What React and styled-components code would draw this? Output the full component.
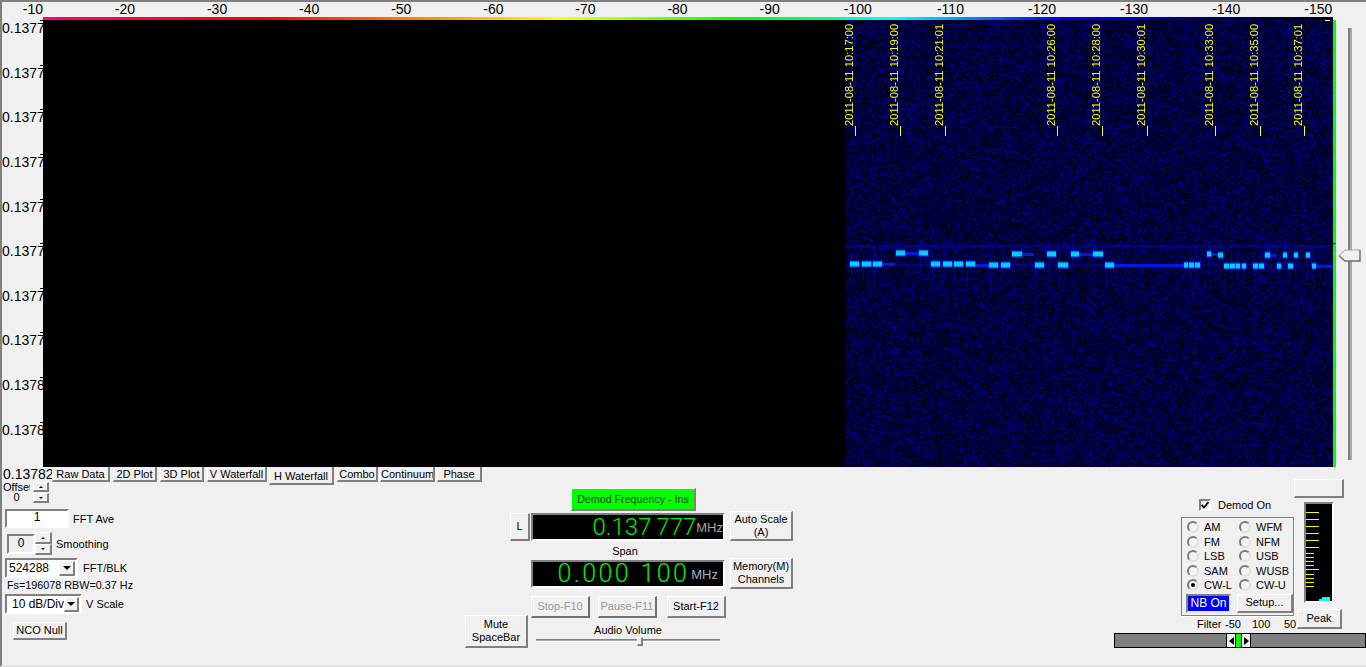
import React, { useEffect, useRef } from "react";
import styled, { createGlobalStyle, css } from "styled-components";

const Global = createGlobalStyle`
  html, body { margin: 0; padding: 0; background: #f0f0f0; overflow: hidden; }
  * { box-sizing: border-box; }
  body { font: 11px/14px "Liberation Sans", Arial, sans-serif; color: #000; }
`;

const raised = css`
  background: #f0f0f0;
  border-style: solid;
  border-width: 1px 2px 2px 1px;
  border-color: #fff #808080 #808080 #fff;
`;
const sunken = css`
  border-style: solid;
  border-width: 2px;
  border-color: #808080 #fff #fff #808080;
`;

const Frame = styled.div`
  width: 1366px; height: 667px; overflow: hidden;
  background: #f0f0f0;
  border-top: 2px solid #808080;
  border-left: 2px solid #808080;
  border-bottom: 2px solid #e4e4e4;
  display: flex; flex-direction: column;
`;
const ScaleRow = styled.div`
  height: 15px; display: flex; font-size: 14px; line-height: 15px;
`;
const ScaleCell = styled.div`
  flex: none; width: ${p => p.$w}px; text-align: right;
`;
const Body = styled.div`display: flex; height: 450px;`;
const AxisCol = styled.div`
  width: 41px; flex: none; padding-top: 1px; overflow: hidden;
`;
const AxisLabel = styled.div`
  position: relative; height: 44.65px; font-size: 14px; line-height: 20px; white-space: nowrap;
  &::before {
    content: ""; position: absolute; top: 2px; right: 0; width: 3px; height: 1px; background: #000;
  }
`;
const PlotCol = styled.div`width: 1290px; flex: none; display: flex; flex-direction: column;`;
const ColorBar = styled.div`
  height: 3px;
  background: linear-gradient(90deg, #ff0080 0%, #ff0000 17%, #ffff00 40%, #00ff00 54%, #00ffff 66%, #0000ff 78.5%, #000000 100%);
`;
const Plot = styled.div`
  position: relative; height: 447px; background: #000;
  &::after { content: ""; position: absolute; top: 0; right: 3px; width: 5px; height: 1px; background: #fff; }
`;
const WaterCanvas = styled.canvas`display: block;`;
const TimeMark = styled.div`
  position: absolute; top: 5px; left: ${p => p.$x - 54}px; height: 111px;
  display: flex; align-items: flex-end;
`;
const TimeText = styled.div`
  writing-mode: vertical-rl; transform: rotate(180deg);
  width: 12px; line-height: 12px; height: 101px; margin-bottom: 10px; white-space: nowrap;
  font-size: 11.2px; color: #ffff00; text-align: left;
`;
const TimeTick = styled.div`width: 1px; height: 10px; background: #ffff00;`;
const GreenBar = styled.div`
  position: relative; width: 3px; height: 447px; margin-top: 3px; background: #00ff00; flex: none;
  &::after { content: ""; position: absolute; top: 223px; left: 0; width: 3px; height: 1px; background: #003000; }
`;
const SliderCol = styled.div`
  position: relative; flex: 1; display: flex; justify-content: flex-start; padding: 11px 0 7px 12px;
`;
const VTrack = styled.div`
  width: 4px; background: #a8a8a8; border-left: 2px solid #808080;
`;
const VThumb = styled.svg`position: absolute; left: 2px; top: 232px;`;

const Bottom = styled.div`
  flex: 1; display: grid;
  grid-template-columns: 463px 330px 1fr;
  grid-template-rows: 21px 1fr;
`;
const LeftCol = styled.div`
  grid-column: 1; grid-row: 1 / 3; padding-left: 3px;
`;
const CutLabel = styled.div`
  margin-left: -2px; width: 50px; height: 14px; overflow: hidden; font-size: 14px; line-height: 14px; white-space: nowrap;
`;
const OffsetRow = styled.div`display: flex; margin-top: 1px; margin-left: -2px;`;
const OffsetText = styled.div`
  width: 27px; height: 21px; text-align: center; line-height: 10px; overflow: hidden;
`;
const SpinStack = styled.div`
  display: flex; flex-direction: column; gap: ${p => p.$gap ?? 0}px; margin-left: ${p => p.$ml ?? 0}px;
`;
const SpinBtn = styled.div`
  ${raised};
  width: ${p => p.$w ?? 16}px; height: ${p => p.$h ?? 10}px;
  display: flex; align-items: center; justify-content: center;
  &::after {
    content: ""; width: 0; height: 0;
    border-left: 2px solid transparent; border-right: 2px solid transparent;
    ${p => p.$up ? "border-bottom: 2px solid #000;" : "border-top: 2px solid #000;"}
  }
`;
const FieldRow = styled.div`
  display: flex; align-items: center; margin-top: ${p => p.$mt ?? 0}px; margin-left: ${p => p.$ml ?? 0}px;
`;
const NumBox = styled.div`
  ${sunken};
  width: ${p => p.$w}px; height: ${p => p.$h}px; background: ${p => p.$bg};
  text-align: center; line-height: ${p => p.$h - 6}px; font-size: 12px;
`;
const FieldLabel = styled.div`margin-left: ${p => p.$ml}px; white-space: nowrap;`;
const Select = styled.div`
  ${sunken};
  width: ${p => p.$w}px; height: 20px; background: #fff;
  display: flex; align-items: center; justify-content: space-between;
  padding: 0 1px 0 ${p => p.$pl}px; font-size: 12px; white-space: nowrap;
`;
const SelectArrow = styled.div`
  ${raised};
  width: 16px; height: 15px; display: flex; align-items: center; justify-content: center;
  &::after {
    content: ""; width: 0; height: 0;
    border-left: 4px solid transparent; border-right: 4px solid transparent; border-top: 4px solid #000;
  }
`;
const FsLine = styled.div`margin-left: 2px; white-space: nowrap; font-size: 10.8px;`;
const Btn = styled.button`
  ${raised};
  display: block; padding: 0; margin: 0; flex: none;
  font: 11px/13px "Liberation Sans", Arial, sans-serif; color: ${p => p.$disabled ? "#9a9a9a" : "#000"};
  width: ${p => p.$w}px; height: ${p => p.$h}px;
  margin-top: ${p => p.$mt ?? 0}px; margin-left: ${p => p.$ml ?? 0}px;
  ${p => p.$disabled && "border-color: #fff #6f6f6f #6f6f6f #fff;"}
`;

const Tabs = styled.div`
  grid-column: 1 / 3; grid-row: 1; margin-left: 50px; display: flex; align-items: flex-start; height: 18px; position: relative; z-index: 1;
`;
const Tab = styled.div`
  ${raised};
  border-top: 0;
  width: ${p => p.$w}px; height: ${p => p.$active ? 18 : 15}px;
  margin-right: ${p => p.$gap}px;
  text-align: center; line-height: ${p => p.$active ? 18 : 14}px; font-size: 11px; white-space: nowrap; overflow: hidden;
`;

const CenterCol = styled.div`grid-column: 2; grid-row: 2; display: flex; flex-direction: column;`;
const DemodBtn = styled(Btn)`background: #00ff00; color: #063a06; font-size: 10.7px; border-color: #fff #808080 #808080 #fff;`;
const FreqRow = styled.div`display: flex; align-items: flex-end; height: ${p => p.$h}px; margin-left: ${p => p.$ml}px;`;
const SmallCaption = styled.div`height: 17px; padding-top: 3px; margin-left: 66px; width: 188px; text-align: center;`;
const Display = styled.div`
  ${sunken};
  width: 194px; height: 28px; background: #000; flex: none;
  margin-left: ${p => p.$ml ?? 0}px; margin-bottom: ${p => p.$mb ?? 0}px; margin-right: 5px;
  display: flex; align-items: center; justify-content: flex-end; padding-right: ${p => p.$pr}px;
`;
const Digits = styled.span`
  font: 300 ${p => p.$fs}px/24px Roboto, "Liberation Sans", sans-serif; color: #00f000;
  letter-spacing: ${p => p.$ls}px; word-spacing: ${p => p.$ws}px; white-space: nowrap;
`;
const Unit = styled.span`
  font-size: 13px; color: ${p => p.$c}; margin-left: ${p => p.$ml}px; padding-top: 2px;
`;
const TransportRow = styled.div`display: flex; margin: 7px 0 0 66px;`;
const AudioRow = styled.div`display: flex; margin-top: -3px;`;
const AudioCol = styled.div`
  width: 184px; margin-left: 8px; padding-top: 8px; display: flex; flex-direction: column; align-items: center;
`;
const AudioTrack = styled.div`
  position: relative; width: 184px; height: 3px; margin-top: 2px;
  background: #a8a8a8; border-top: 1px solid #808080; border-bottom: 1px solid #fff;
`;
const AudioThumb = styled.div`
  ${raised};
  position: absolute; left: 101px; top: -3px; width: 6px; height: 9px;
`;

const RightCol = styled.div`grid-column: 3; grid-row: 1 / 3; display: flex; flex-direction: column;`;
const RightTop = styled.div`display: flex; height: 166px; margin-left: 386px;`;
const ModeCol = styled.div`width: 113px; flex: none; padding-top: 32px;`;
const DemodLine = styled.div`display: flex; align-items: center; height: 12px; margin-left: 18px;`;
const CheckBox = styled.div`
  ${sunken};
  width: 12px; height: 12px; background: #f0f0f0; margin-right: 7px;
  display: flex; align-items: center; justify-content: center;
`;
const ModeBox = styled.div`
  margin-top: 6px; height: 99px; border: 1px solid #808080; box-shadow: 1px 1px 0 #fff;
  padding: 2px 0 0 4px;
`;
const ModeGrid = styled.div`
  display: grid; grid-template-columns: 52px 52px; grid-auto-rows: 14.5px; padding-left: 1px;
`;
const ModeItem = styled.div`display: flex; align-items: center; font-size: 11px;`;
const Radio = styled.div`
  position: relative; width: 12px; height: 12px; border-radius: 50%; background: #f4f4f4;
  border: 2px solid; border-color: #7a7a7a #e0e0e0 #e0e0e0 #7a7a7a; margin-right: 5px; flex: none;
  ${p => p.$on && css`
    &::after {
      content: ""; position: absolute; left: 2px; top: 2px; width: 4px; height: 4px; border-radius: 50%; background: #000;
    }
  `}
`;
const ModeBtns = styled.div`display: flex; gap: 6px; margin-top: 1px; align-items: flex-start;`;
const NbBtn = styled(Btn)`
  background: #0000ff; color: #fff; font-size: 12px;
  border-color: #808080 #e8e8e8 #e8e8e8 #808080; border-width: 2px;
`;
const FilterLabels = styled.div`
  display: grid; grid-template-columns: 28px 27px 32px auto; margin: 1px 0 0 16px; white-space: nowrap; font-size: 11px;
`;
const MeterCol = styled.div`width: 50px; flex: none; padding-top: 12px;`;
const MeterBox = styled.div`
  ${sunken};
  width: 30px; height: 101px; margin: 4px 0 6px 10px; background: #000;
`;
const MeterSvg = styled.svg`display: block;`;
const FilterBar = styled.div`
  margin-left: 319px; height: 15px; border: 1px solid #000; background: #808080;
  display: flex; padding-left: 111px;
`;
const FilterArrow = styled.div`
  width: 10px; background: #f0f0f0; border-left: 1px solid #000; border-right: 1px solid #000;
  display: flex; align-items: center; justify-content: center;
  &::after {
    content: ""; width: 0; height: 0;
    border-top: 4px solid transparent; border-bottom: 4px solid transparent;
    ${p => p.$left ? "border-right: 5px solid #000;" : "border-left: 5px solid #000;"}
  }
`;
const FilterGreen = styled.div`width: 5px; background: #00ff00; flex: none;`;

const SCALE = [-10, -20, -30, -40, -50, -60, -70, -80, -90, -100, -110, -120, -130, -140, -150];
const AXIS = ["0.1377", "0.1377", "0.1377", "0.1377", "0.1377", "0.1377", "0.1377", "0.1377", "0.1378", "0.1378"];
const TIMES = [
  [854, "10:17:00"], [899, "10:19:00"], [944, "10:21:01"], [1056, "10:26:00"], [1101, "10:28:00"],
  [1146, "10:30:01"], [1214, "10:33:00"], [1259, "10:35:00"], [1303, "10:37:01"],
];
const TABS = [
  ["Raw Data", 58, 3], ["2D Plot", 44, 3], ["3D Plot", 44, 3], ["V Waterfall", 60, 2], ["H Waterfall", 65, 3, true],
  ["Combo", 41, 2], ["Continuum", 55, 2], ["Phase", 45, 0],
];
const MODES = [
  ["AM", "WFM"], ["FM", "NFM"], ["LSB", "USB"], ["SAM", "WUSB"], ["CW-L", "CW-U"],
];
const LOWER = [[30,58],[65,92],[98,126],[271,298],[306,333],[340,367],[376,402],[444,471],[478,505],[580,608],[650,677],[788,815],[1022,1034],[1039,1052],[1056,1070],[1142,1157],[1160,1174],[1177,1191],[1195,1209],[1229,1243],[1247,1261],[1299,1311],[1333,1347],[1403,1416]];
const LOWER_DIM = [[126,163],[402,444],[815,1022],[1416,1470]];
const UPPER = [[168,194],[236,263],[513,540],[617,644],[686,712],[754,781],[1091,1104],[1126,1139],[1264,1278],[1317,1330],[1350,1364],[1385,1398]];
const UPPER_DIM = [[194,236],[540,578],[712,754],[1104,1126],[1278,1298]];
const LOWER_Y = 261, UPPER_Y = 250, PLOT_Y = 20, PLOT_X = 43;
const zx = z => Math.round(840 + z / 2.975 - PLOT_X);

function drawWaterfall(cv) {
  const W = 1290, H = 447, x0 = 845 - PLOT_X;
  const ctx = cv.getContext("2d");
  const img = ctx.createImageData(W, H);
  let s = 123456789;
  const rnd = () => { s ^= s << 13; s ^= s >>> 17; s ^= s << 5; return (s >>> 0) / 4294967296; };
  const prevRow = new Float32Array(W);
  for (let y = 0; y < H; y++) {
    let prev = 0;
    for (let x = 0; x < W; x++) {
      const i = (y * W + x) * 4;
      img.data[i + 3] = 255;
      if (x < x0) continue;
      const r = rnd();
      const v = 0.9 * r * r + 0.3 * prev + 0.12 * prevRow[x];
      prev = v; prevRow[x] = v;
      img.data[i + 2] = Math.min(160, v * 122);
    }
  }
  ctx.putImageData(img, 0, 0);
  const drift = x => Math.round((x - x0) / 490 * 2);

  // weak carrier lines
  ctx.fillStyle = "rgba(0,0,200,0.6)";
  ctx.fillRect(x0, 245 - PLOT_Y, W - x0, 2);
  ctx.fillStyle = "rgba(0,0,200,0.45)";
  ctx.fillRect(x0, 264 - PLOT_Y, W - x0, 2);

  const streak = (x, top, bot, a) => {
    ctx.fillStyle = `rgba(0,20,240,${a})`;
    ctx.fillRect(x, top - PLOT_Y, 1, bot - top);
  };
  const run = (list, y0, dim) => {
    list.forEach(([a, b], i) => {
      const xa = zx(a), xb = zx(b), d = drift(xa), y = y0 + d - PLOT_Y;
      if (dim) {
        ctx.fillStyle = "#0018e8";
        ctx.fillRect(xa, y + 2, xb - xa, 3);
        return;
      }
      streak(xa + 1, y0 - 8 - (i % 3) * 3, y0 + 18 + (i % 4) * 4, 0.3);
      ctx.fillStyle = "rgba(0,40,255,0.55)";
      ctx.fillRect(xa - 1, y - 1, xb - xa + 2, 8);
      ctx.fillStyle = "#0068ff";
      ctx.fillRect(xa, y, xb - xa, 6);
      ctx.fillStyle = "#00d0ff";
      ctx.fillRect(xa, y + 1, xb - xa, 4);
    });
  };
  run(LOWER_DIM, LOWER_Y, true);
  run(UPPER_DIM, UPPER_Y, true);
  run(LOWER, LOWER_Y, false);
  run(UPPER, UPPER_Y, false);
}

const Waterfall = () => {
  const ref = useRef(null);
  useEffect(() => { if (ref.current) drawWaterfall(ref.current); }, []);
  return <WaterCanvas ref={ref} width={1290} height={447} />;
};

const LONG = [8, 15, 22, 29, 36, 43, 65];
const SHORT = [49, 53, 57, 61, 70, 74, 78, 82];

export default function App() {
  return (
    <Frame>
      <Global />
      <ScaleRow>
        {SCALE.map((v, i) => <ScaleCell key={v} $w={i === 0 ? 41 : 92.1}>{v}</ScaleCell>)}
      </ScaleRow>
      <Body>
        <AxisCol>
          {AXIS.map((t, i) => <AxisLabel key={i}>{t}</AxisLabel>)}
        </AxisCol>
        <PlotCol>
          <ColorBar />
          <Plot>
            <Waterfall />
            {TIMES.map(([x, t]) => (
              <TimeMark key={x} $x={x}>
                <TimeText>2011-08-11 {t}</TimeText>
                <TimeTick />
              </TimeMark>
            ))}
          </Plot>
        </PlotCol>
        <GreenBar />
        <SliderCol>
          <VTrack />
          <VThumb width="24" height="14" viewBox="0 0 24 14">
            <path d="M1 6.5 L7 1 H22 V12 H7 Z" fill="#f0f0f0" />
            <path d="M1 6.5 L7 1 H22" fill="none" stroke="#a0a0a0" />
            <path d="M1 6.5 L7 12 H22 V1" fill="none" stroke="#707070" strokeWidth="1.5" />
          </VThumb>
        </SliderCol>
      </Body>
      <Bottom>
        <Tabs>
          {TABS.map(([t, w, g, a]) => <Tab key={t} $w={w} $gap={g} $active={a}>{t}</Tab>)}
        </Tabs>
        <LeftCol>
          <CutLabel>0.13782</CutLabel>
          <OffsetRow>
            <OffsetText>Offset<br />0</OffsetText>
            <SpinStack $ml={3} $gap={1}>
              <SpinBtn $up />
              <SpinBtn />
            </SpinStack>
          </OffsetRow>
          <FieldRow $mt={6}>
            <NumBox $w={64} $h={19} $bg="#fff">1</NumBox>
            <FieldLabel $ml={4}>FFT Ave</FieldLabel>
          </FieldRow>
          <FieldRow $mt={4} $ml={2}>
            <NumBox $w={28} $h={20} $bg="#f0f0f0">0</NumBox>
            <SpinStack>
              <SpinBtn $up $w={17} $h={12} />
              <SpinBtn $w={17} $h={11} />
            </SpinStack>
            <FieldLabel $ml={4}>Smoothing</FieldLabel>
          </FieldRow>
          <FieldRow $mt={3}>
            <Select $w={73} $pl={2}>524288<SelectArrow /></Select>
            <FieldLabel $ml={5}>FFT/BLK</FieldLabel>
          </FieldRow>
          <FsLine>Fs=196078 RBW=0.37 Hz</FsLine>
          <FieldRow $mt={2}>
            <Select $w={77} $pl={5}>10 dB/Div<SelectArrow /></Select>
            <FieldLabel $ml={4}>V Scale</FieldLabel>
          </FieldRow>
          <Btn $w={54} $h={18} $mt={8} $ml={8}>NCO Null</Btn>
        </LeftCol>
        <CenterCol>
          <DemodBtn $w={125} $h={23} $ml={106}>Demod Frequency - Ins</DemodBtn>
          <FreqRow $h={30} $ml={45}>
            <Btn $w={20} $h={28}>L</Btn>
            <Display $ml={1} $pr={0}>
              <Digits $fs={24} $ls={0} $ws={-1}>0.137 777</Digits>
              <Unit $c="#a8a0a0" $ml={0}>MHz</Unit>
            </Display>
            <Btn $w={63} $h={30}>Auto Scale<br />(A)</Btn>
          </FreqRow>
          <SmallCaption>Span</SmallCaption>
          <FreqRow $h={31} $ml={66}>
            <Display $mb={1} $pr={5}>
              <Digits $fs={25} $ls={2.4} $ws={1}>0.000 100</Digits>
              <Unit $c="#a0b0c4" $ml={2}>MHz</Unit>
            </Display>
            <Btn $w={63} $h={31}>Memory(M)<br />Channels</Btn>
          </FreqRow>
          <TransportRow>
            <Btn $w={59} $h={22} $disabled>Stop-F10</Btn>
            <Btn $w={59} $h={22} $ml={8} $disabled>Pause-F11</Btn>
            <Btn $w={59} $h={22} $ml={10}>Start-F12</Btn>
          </TransportRow>
          <AudioRow>
            <Btn $w={63} $h={33}>Mute<br />SpaceBar</Btn>
            <AudioCol>
              <div>Audio Volume</div>
              <AudioTrack><AudioThumb /></AudioTrack>
            </AudioCol>
          </AudioRow>
        </CenterCol>
        <RightCol>
          <RightTop>
            <ModeCol>
              <DemodLine>
                <CheckBox>
                  <svg width="8" height="8" viewBox="0 0 8 8"><path d="M0.5 4 L3 6.5 L7.5 1" fill="none" stroke="#000" strokeWidth="1.8" /></svg>
                </CheckBox>
                Demod On
              </DemodLine>
              <ModeBox>
                <ModeGrid>
                  {MODES.map(([a, b]) => (
                    <React.Fragment key={a}>
                      <ModeItem><Radio $on={a === "CW-L"} />{a}</ModeItem>
                      <ModeItem><Radio />{b}</ModeItem>
                    </React.Fragment>
                  ))}
                </ModeGrid>
                <ModeBtns>
                  <NbBtn $w={45} $h={19}>NB On</NbBtn>
                  <Btn $w={56} $h={19}>Setup...</Btn>
                </ModeBtns>
              </ModeBox>
              <FilterLabels><span>Filter</span><span>-50</span><span>100</span><span>50</span></FilterLabels>
            </ModeCol>
            <MeterCol>
              <Btn $w={50} $h={19} />
              <MeterBox>
                <MeterSvg width="26" height="97" viewBox="0 0 26 97">
                  {LONG.map(y => <rect key={y} x="0" y={y} width="13" height="1" fill="#ffff00" />)}
                  {SHORT.map(y => <rect key={y} x="0" y={y} width="8" height="1" fill="#ffff00" />)}
                  <rect x="16" y="93" width="8" height="4" fill="#00ffff" />
                  <rect x="13" y="95" width="3" height="2" fill="#00ffff" />
                </MeterSvg>
              </MeterBox>
              <Btn $w={45} $h={20} $ml={3}>Peak</Btn>
            </MeterCol>
          </RightTop>
          <FilterBar>
            <FilterArrow $left />
            <FilterGreen />
            <FilterArrow />
          </FilterBar>
        </RightCol>
      </Bottom>
    </Frame>
  );
}
